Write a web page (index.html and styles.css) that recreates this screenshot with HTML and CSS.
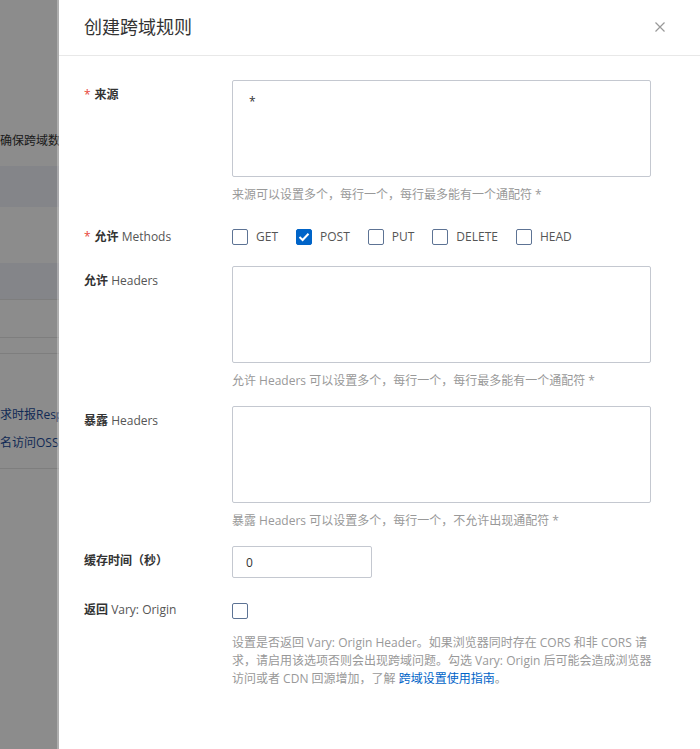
FILE: index.html
```html
<!DOCTYPE html>
<html lang="zh-CN">
<head>
<meta charset="utf-8">
<title>创建跨域规则</title>
<link rel="stylesheet" href="styles.css">
</head>
<body>
<div class="page">
  <div class="bg-note">确保跨域数</div>
  <div class="bg-band bg-band-1"></div>
  <div class="bg-band bg-band-2"></div>
  <div class="bg-row bg-row-1"></div>
  <div class="bg-row bg-row-2"></div>
  <div class="bg-links">
    <div class="bg-link">求时报Resp</div>
    <div class="bg-link">名访问OSS</div>
  </div>
</div>
<div class="mask"></div>
<aside class="drawer">
  <header class="drawer-header">
    <h2 class="drawer-title">创建跨域规则</h2>
    <button class="close" type="button" aria-label="关闭">
      <svg width="10" height="10" viewBox="0 0 10 10"><path d="M0.5 0.5 L9.5 9.5 M9.5 0.5 L0.5 9.5" stroke="#999" stroke-width="1.2" fill="none"/></svg>
    </button>
  </header>
  <div class="drawer-body">
    <div class="form-row">
      <div class="label"><span class="req">*</span>来源</div>
      <div class="field">
        <textarea class="textarea">*</textarea>
        <div class="help">来源可以设置多个，每行一个，每行最多能有一个通配符 *</div>
      </div>
    </div>
    <div class="form-row methods-row">
      <div class="label label-inline"><span class="req">*</span>允许 <span class="latin">Methods</span></div>
      <div class="field checks">
        <label class="check"><span class="box"></span>GET</label>
        <label class="check"><span class="box box-on"><svg width="12" height="10" viewBox="0 0 12 10"><path d="M1.5 5 L4.6 8 L10.5 1.8" stroke="#fff" stroke-width="2" fill="none"/></svg></span>POST</label>
        <label class="check"><span class="box"></span>PUT</label>
        <label class="check"><span class="box"></span>DELETE</label>
        <label class="check"><span class="box"></span>HEAD</label>
      </div>
    </div>
    <div class="form-row">
      <div class="label">允许 <span class="latin">Headers</span></div>
      <div class="field">
        <textarea class="textarea"></textarea>
        <div class="help">允许 Headers 可以设置多个，每行一个，每行最多能有一个通配符 *</div>
      </div>
    </div>
    <div class="form-row">
      <div class="label">暴露 <span class="latin">Headers</span></div>
      <div class="field">
        <textarea class="textarea"></textarea>
        <div class="help">暴露 Headers 可以设置多个，每行一个，不允许出现通配符 *</div>
      </div>
    </div>
    <div class="form-row cache-row">
      <div class="label">缓存时间（秒）</div>
      <div class="field">
        <input class="input" type="text" value="0">
      </div>
    </div>
    <div class="form-row">
      <div class="label">返回 <span class="latin">Vary: Origin</span></div>
      <div class="field">
        <div class="vary-box"><span class="box"></span></div>
        <div class="help help-long">设置是否返回 Vary: Origin Header。如果浏览器同时存在 CORS 和非 CORS 请<br>求，请启用该选项否则会出现跨域问题。勾选 Vary: Origin 后可能会造成浏览器<br>访问或者 CDN 回源增加，了解 <a class="link" href="#">跨域设置使用指南</a>。</div>
      </div>
    </div>
  </div>
</aside>
</body>
</html>
```

FILE: styles.css
```css
* { box-sizing: border-box; }
html, body { margin: 0; height: 100%; }
body {
  font-family: "Open Sans", "Noto Sans CJK SC", sans-serif;
  font-size: 12px;
  color: #333;
  background: #fff;
  position: relative;
  overflow: hidden;
}

/* page behind the mask */
.page { padding-top: 132px; }
.bg-note { line-height: 18px; color: #333; white-space: nowrap; }
.bg-band { background: #f0f3fa; }
.bg-band-1 { margin-top: 16px; height: 41px; }
.bg-band-2 { margin-top: 56px; height: 37px; border-bottom: 1px solid #e6e6e6; }
.bg-row-1 { height: 38px; border-bottom: 1px solid #e6e6e6; }
.bg-row-2 { height: 16px; border-bottom: 1px solid #e6e6e6; }
.bg-links {
  padding: 52px 0 16px;
  border-bottom: 1px solid #e6e6e6;
  display: flex;
  flex-direction: column;
  gap: 10px;
}
.bg-link { line-height: 18px; color: #1e4d9c; white-space: nowrap; }

.mask { position: absolute; inset: 0; background: rgba(0, 0, 0, 0.45); }

/* drawer */
.drawer {
  position: absolute;
  top: 0;
  right: 0;
  bottom: 0;
  width: 643px;
  background: #fff;
  background-clip: padding-box;
  border-left: 2px solid rgba(255, 255, 255, 0.3);
  display: flex;
  flex-direction: column;
}
.drawer-header {
  height: 56px;
  border-bottom: 1px solid #e8e8e8;
  display: flex;
  align-items: center;
  justify-content: space-between;
  padding: 0 35px 1px 25px;
}
.drawer-title {
  margin: 0;
  font-size: 18px;
  font-weight: 400;
  line-height: 24px;
  color: #333;
}
.close {
  border: 0;
  background: none;
  padding: 0;
  width: 10px;
  height: 10px;
  display: flex;
  cursor: pointer;
}

.drawer-body { padding: 24px 49px 0 25px; }
.form-row {
  display: grid;
  grid-template-columns: 148px 1fr;
  margin-bottom: 16px;
}
.label {
  padding-top: 6px;
  line-height: 18px;
  font-weight: 700;
  color: #333;
  white-space: nowrap;
}
.label .latin { font-weight: 400; color: #555; }
.req { color: #e84738; font-weight: 400; margin-right: 4px; }
.label-inline { padding-top: 0; }
.field { min-width: 0; }

.textarea {
  display: block;
  width: 100%;
  height: 97px;
  border: 1px solid #c4c8d0;
  border-radius: 2px;
  padding: 12px 16px;
  font: inherit;
  line-height: 18px;
  color: #333;
  resize: none;
  outline: none;
}
.help {
  margin-top: 9px;
  line-height: 18px;
  color: #999;
  white-space: nowrap;
}
.help-long { margin-top: 15px; }
.link { color: #0064c8; text-decoration: none; }

.methods-row { padding-top: 8px; margin-bottom: 20px; }
.checks { display: flex; align-items: center; gap: 18px; color: #555; line-height: 18px; }
.check { display: flex; align-items: center; gap: 8px; }
.box {
  width: 16px;
  height: 16px;
  border: 1px solid #5d7394;
  border-radius: 2px;
  background: #fff;
  display: flex;
  align-items: center;
  justify-content: center;
}
.box-on { background: #0064c8; border-color: #0064c8; }

.cache-row { margin-bottom: 17px; }
.input {
  display: block;
  width: 140px;
  height: 32px;
  border: 1px solid #c4c8d0;
  border-radius: 2px;
  padding: 0 13px;
  font: inherit;
  color: #333;
  outline: none;
}
.vary-box { padding-top: 8px; display: flex; }
```
